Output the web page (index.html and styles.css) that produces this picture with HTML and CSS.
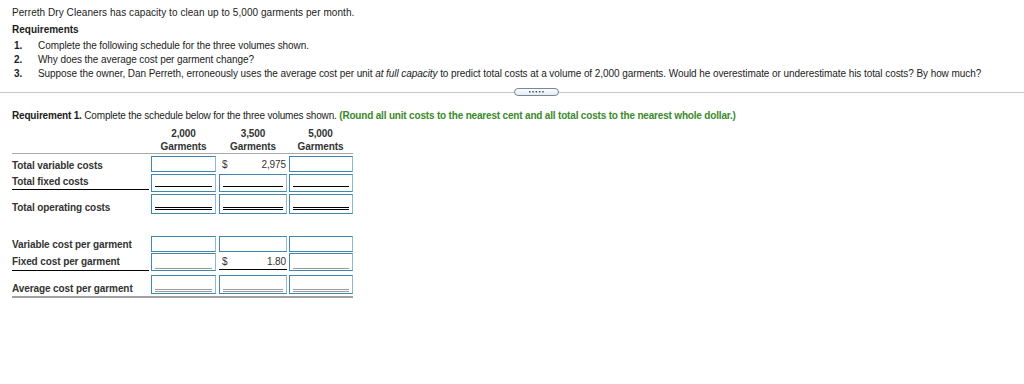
FILE: index.html
```html
<!DOCTYPE html>
<html lang="en">
<head>
    <meta charset="UTF-8">
    <title>Perreth Dry Cleaners</title>
    <link rel="stylesheet" href="styles.css">
</head>
<body>
    <div class="section top">
        <p class="intro">Perreth Dry Cleaners has capacity to clean up to 5,000 garments per month.</p>
        <p class="heading">Requirements</p>
        <ol class="reqs">
            <li><span class="num">1.</span>Complete the following schedule for the three volumes shown.</li>
            <li><span class="num">2.</span>Why does the average cost per garment change?</li>
            <li><span class="num">3.</span>Suppose the owner, Dan Perreth, erroneously uses the average cost per unit <i>at full capacity</i> to predict total costs at a volume of 2,000 garments. Would he overestimate or underestimate his total costs? By how much?</li>
        </ol>
    </div>

    <div class="divider">
        <span class="rule-left"></span>
        <span class="pill">
            <svg width="15" height="2" viewBox="0 0 15 2">
                <rect x="0" y="0" width="1.5" height="1.5" fill="#4a5560"/>
                <rect x="3.3" y="0" width="1.5" height="1.5" fill="#4a5560"/>
                <rect x="6.6" y="0" width="1.5" height="1.5" fill="#4a5560"/>
                <rect x="9.9" y="0" width="1.5" height="1.5" fill="#4a5560"/>
                <rect x="13.2" y="0" width="1.5" height="1.5" fill="#4a5560"/>
            </svg>
        </span>
        <span class="rule-right"></span>
    </div>

    <div class="section">
        <p class="task"><b>Requirement 1.</b> Complete the schedule below for the three volumes shown. <span class="hint">(Round all unit costs to the nearest cent and all total costs to the nearest whole dollar.)</span></p>

        <table class="schedule">
            <colgroup>
                <col class="c-label">
                <col class="c-one">
                <col class="c-two">
                <col class="c-three">
            </colgroup>
            <thead>
                <tr>
                    <th></th>
                    <th>2,000<br>Garments</th>
                    <th>3,500<br>Garments</th>
                    <th>5,000<br>Garments</th>
                </tr>
            </thead>
            <tbody>
                <tr class="r-var">
                    <td><div class="label">Total variable costs</div></td>
                    <td><div class="box b1"></div></td>
                    <td><div class="amount"><span>$</span><span>2,975</span></div></td>
                    <td><div class="box b3"></div></td>
                </tr>
                <tr class="r-fixed">
                    <td><div class="label under">Total fixed costs</div></td>
                    <td><div class="box b1"><div class="line"></div></div></td>
                    <td><div class="box b2"><div class="line"></div></div></td>
                    <td><div class="box b3"><div class="line"></div></div></td>
                </tr>
                <tr class="r-total">
                    <td><div class="label">Total operating costs</div></td>
                    <td><div class="box b1"><div class="line double"></div></div></td>
                    <td><div class="box b2"><div class="line double"></div></div></td>
                    <td><div class="box b3"><div class="line double"></div></div></td>
                </tr>
                <tr class="r-gap">
                    <td colspan="4"></td>
                </tr>
                <tr class="r-unitvar">
                    <td><div class="label">Variable cost per garment</div></td>
                    <td><div class="box b1"></div></td>
                    <td><div class="box b2"></div></td>
                    <td><div class="box b3"></div></td>
                </tr>
                <tr class="r-unitfixed">
                    <td><div class="label under">Fixed cost per garment</div></td>
                    <td><div class="box b1"><div class="line soft"></div></div></td>
                    <td><div class="amount under"><span>$</span><span>1.80</span></div></td>
                    <td><div class="box b3"><div class="line soft"></div></div></td>
                </tr>
                <tr class="r-avg">
                    <td><div class="label">Average cost per garment</div></td>
                    <td><div class="box b1"><div class="line double soft"></div></div></td>
                    <td><div class="box b2"><div class="line double soft"></div></div></td>
                    <td><div class="box b3"><div class="line double soft"></div></div></td>
                </tr>
            </tbody>
        </table>
    </div>
</body>
</html>
```

FILE: styles.css
```css
body {
    margin: 0;
    font-family: "Liberation Sans", Arial, sans-serif;
    font-size: 10px;
    color: #1c1c1c;
    background-color: #fff;
}
p {
    margin: 0;
}
.section {
    padding: 0 12px;
}
.top {
    padding-top: 6px;
}
.intro {
    line-height: 14px;
    letter-spacing: 0.06px;
}
.heading {
    font-weight: bold;
    line-height: 14px;
    margin-top: 3px;
}
.reqs {
    list-style: none;
    margin: 2px 0 0;
    padding: 0 0 0 2px;
}
.reqs li {
    line-height: 14px;
    white-space: nowrap;
    letter-spacing: -0.07px;
}
.num {
    display: inline-block;
    width: 24px;
    font-weight: bold;
}

/* collapsible bar between the question and the answer area */
.divider {
    display: flex;
    align-items: center;
    margin-top: 7px;
    height: 8px;
}
.rule-left, .rule-right {
    height: 1px;
    background-color: #c6c6c6;
}
.rule-left {
    flex: 0 0 514px;
}
.rule-right {
    flex: 1;
}
.pill {
    display: flex;
    align-items: center;
    justify-content: center;
    width: 43px;
    height: 6px;
    border: 1px solid #75879a;
    border-radius: 4px;
    background: linear-gradient(#fafbfc, #e8ecf0);
}

.task {
    line-height: 14px;
    margin-top: 13px;
    letter-spacing: -0.18px;
}
.hint {
    color: #3a8a2a;
    font-weight: bold;
}

/* schedule table */
.schedule {
    border-collapse: collapse;
    table-layout: fixed;
    width: 341px;
    margin-top: 4px;
    color: #333;
    letter-spacing: -0.1px;
}
.c-label { width: 137px; }
.c-one { width: 69px; }
.c-two { width: 70px; }
.c-three { width: 65px; }
.schedule th {
    font-weight: bold;
    line-height: 13px;
    padding: 0;
    height: 26px;
    text-align: center;
    vertical-align: top;
    border-bottom: 1px solid #a8a8a8;
}
.schedule td {
    padding: 0;
    vertical-align: top;
}
.label {
    font-weight: bold;
    line-height: 12px;
    white-space: nowrap;
}
.label.under {
    border-bottom: 1px solid #000;
}

.box {
    box-sizing: border-box;
    border: 1px solid #3f87ad;
    border-right-color: #8bb9d1;
    background-color: #fff;
    padding: 0 3px;
}
.b1 { margin-left: 2px; width: 65px; }
.b2 { margin-left: 1px; width: 68px; }
.b3 { margin-left: 1px; width: 64px; }
.line {
    border-bottom: 1px solid #000;
}
.line.double {
    border-bottom: 3px double #000;
}
.line.soft {
    border-bottom-color: #9a9a9a;
}

.amount {
    display: flex;
    justify-content: space-between;
    margin-left: 1px;
    width: 68px;
    padding: 0 1px 0 3px;
    box-sizing: border-box;
    line-height: 12px;
    color: #333;
}
.amount.under {
    border-bottom: 1px solid #000;
}

/* row geometry */
.r-var td { height: 19px; }
.r-var .label { padding-top: 6px; }
.r-var .box { margin-top: 2px; height: 16px; }
.r-var .amount { padding-top: 5px; }

.r-fixed td { height: 19px; }
.r-fixed .label { padding-top: 3px; height: 13px; }
.r-fixed .box { margin-top: 1px; height: 18px; }
.r-fixed .line { height: 11px; }

.r-total td { height: 22px; }
.r-total .label { padding-top: 10px; }
.r-total .box { margin-top: 2px; height: 20px; }
.r-total .line { height: 12px; }

.r-gap td { height: 20px; }

.r-unitvar td { height: 18px; }
.r-unitvar .label { padding-top: 5px; }
.r-unitvar .box { margin-top: 2px; height: 16px; }

.r-unitfixed td { height: 21px; }
.r-unitfixed .label { padding-top: 4px; height: 14px; }
.r-unitfixed .box { margin-top: 1px; height: 18px; }
.r-unitfixed .line { height: 14px; }
.r-unitfixed .amount { padding-top: 4px; height: 18px; }

.r-avg td {
    height: 23px;
    border-bottom: 2px solid #a0a0a0;
}
.r-avg .label { padding-top: 10px; }
.r-avg .box { margin-top: 2px; height: 19px; }
.r-avg .line { height: 13px; }
```
